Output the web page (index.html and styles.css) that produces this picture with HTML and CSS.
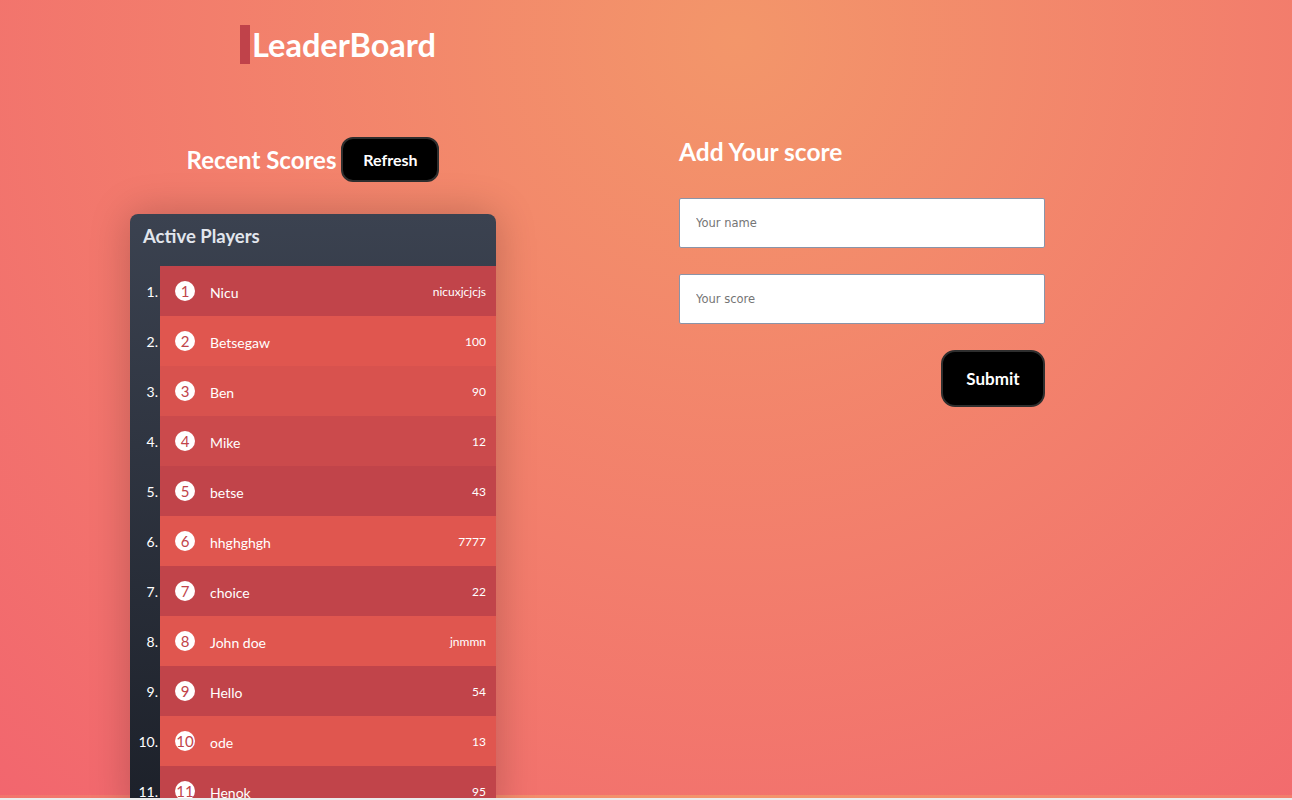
FILE: index.html
```html
<!DOCTYPE html>
<html lang="en">
<head>
<meta charset="utf-8">
<title>LeaderBoard</title>
<link rel="stylesheet" href="styles.css">
</head>
<body>
<header class="top">
  <h1 class="brand">LeaderBoard</h1>
</header>
<main class="layout">
  <section class="scores">
    <div class="scores-head">
      <h2 class="section-title">Recent Scores</h2>
      <button class="btn btn-refresh" type="button">Refresh</button>
    </div>
    <div class="board">
      <div class="board-title">Active Players</div>
      <ol class="board-list">
        <li class="entry"><span class="rank">1.</span><div class="row r1"><span class="badge">1</span><span class="name">Nicu</span><span class="score">nicuxjcjcjs</span></div></li>
        <li class="entry"><span class="rank">2.</span><div class="row r2"><span class="badge">2</span><span class="name">Betsegaw</span><span class="score">100</span></div></li>
        <li class="entry"><span class="rank">3.</span><div class="row r3"><span class="badge">3</span><span class="name">Ben</span><span class="score">90</span></div></li>
        <li class="entry"><span class="rank">4.</span><div class="row r4"><span class="badge">4</span><span class="name">Mike</span><span class="score">12</span></div></li>
        <li class="entry"><span class="rank">5.</span><div class="row r1"><span class="badge">5</span><span class="name">betse</span><span class="score">43</span></div></li>
        <li class="entry"><span class="rank">6.</span><div class="row r2"><span class="badge">6</span><span class="name">hhghghgh</span><span class="score">7777</span></div></li>
        <li class="entry"><span class="rank">7.</span><div class="row r1"><span class="badge">7</span><span class="name">choice</span><span class="score">22</span></div></li>
        <li class="entry"><span class="rank">8.</span><div class="row r2"><span class="badge">8</span><span class="name">John doe</span><span class="score">jnmmn</span></div></li>
        <li class="entry"><span class="rank">9.</span><div class="row r1"><span class="badge">9</span><span class="name">Hello</span><span class="score">54</span></div></li>
        <li class="entry"><span class="rank">10.</span><div class="row r2"><span class="badge">10</span><span class="name">ode</span><span class="score">13</span></div></li>
        <li class="entry"><span class="rank">11.</span><div class="row r1"><span class="badge">11</span><span class="name">Henok</span><span class="score">95</span></div></li>
      </ol>
    </div>
  </section>
  <section class="add">
    <h2 class="section-title">Add Your score</h2>
    <form class="add-form">
      <input class="field" type="text" placeholder="Your name">
      <input class="field" type="text" placeholder="Your score">
      <div class="actions"><button class="btn btn-submit" type="button">Submit</button></div>
    </form>
  </section>
</main>
<div class="bottom-edge"></div>
</body>
</html>
```
FILE: styles.css
```css
html {
  background-color: #f2666e;
  background-image: radial-gradient(circle farthest-corner at 57% 5%, #f3966a 0%, #f2666e 100%);
  background-size: 100% 795px;
  background-repeat: repeat-y;
}
body {
  margin: 0;
  font-family: Lato, "Liberation Sans", sans-serif;
  color: #fff;
}
.top {
  padding: 25px 0 0 240px;
}
.brand {
  margin: 0;
  display: inline-block;
  font-size: 32.5px;
  font-weight: 700;
  line-height: 39px;
  border-left: 10px solid #c0424a;
  padding-left: 2px;
  color: #fff;
}
.layout {
  display: flex;
  gap: 183px;
  padding-left: 130px;
  margin-top: 73px;
}
.scores {
  width: 366px;
}
.scores-head {
  height: 45px;
  display: flex;
  align-items: center;
  justify-content: center;
  gap: 5px;
}
.section-title {
  margin: 0;
  font-size: 24px;
  font-weight: 700;
  line-height: 29px;
  color: #fff;
}
.add .section-title {
  font-size: 24.5px;
}
.btn {
  font-family: Lato, "Liberation Sans", sans-serif;
  font-weight: 700;
  color: #fff;
  background: #000;
  border: 2px solid #2e2e2e;
  cursor: pointer;
}
.btn-refresh {
  width: 98px;
  height: 45px;
  border-radius: 12px;
  font-size: 16px;
}
.board {
  margin-top: 32px;
  border-radius: 8px 8px 0 0;
  overflow: hidden;
  background: linear-gradient(180deg, #3b4250 0%, #1c2029 100%);
  box-shadow: 0 0 40px rgba(0, 0, 0, 0.22);
}
.board-title {
  padding: 0 0 8px 13px;
  line-height: 44px;
  font-size: 18.5px;
  font-weight: 700;
  color: #e2e6ed;
}
.board-list {
  list-style: none;
  margin: 0;
  padding: 0;
}
.entry {
  display: flex;
  height: 50px;
}
.rank {
  width: 28px;
  padding-right: 2px;
  text-align: right;
  font-size: 14px;
  align-self: center;
  color: #fff;
}
.row {
  flex: 1;
  display: flex;
  align-items: center;
  padding: 0 10px 0 15px;
}
.r1 { background: #c1444a; }
.r2 { background: #e0564f; }
.r3 { background: #d8524e; }
.r4 { background: #cb4a4c; }
.badge {
  width: 20px;
  height: 20px;
  border-radius: 50%;
  background: #fff;
  color: #c1444a;
  font-size: 15px;
  line-height: 20px;
  text-align: center;
  flex: none;
}
.name {
  margin-left: 15px;
  margin-top: 3px;
  font-size: 14px;
}
.score {
  margin-left: auto;
  font-size: 12px;
}
.add {
  width: 366px;
}
.add-form {
  margin-top: 32px;
  display: flex;
  flex-direction: column;
  gap: 26px;
}
.field {
  box-sizing: border-box;
  width: 366px;
  height: 50px;
  border: 1px solid #8a94a8;
  border-radius: 2px;
  padding: 0 16px;
  font-family: "DejaVu Sans", Verdana, sans-serif;
  font-size: 11.5px;
  color: #333;
  background: #fff;
}
.field::placeholder {
  color: #757575;
}
.actions {
  display: flex;
  justify-content: flex-end;
}
.btn-submit {
  width: 104px;
  height: 57px;
  border-radius: 14px;
  font-size: 17px;
}
.bottom-edge {
  position: fixed;
  left: 0;
  right: 0;
  bottom: 0;
  height: 2px;
  background: #ececec;
}
```
